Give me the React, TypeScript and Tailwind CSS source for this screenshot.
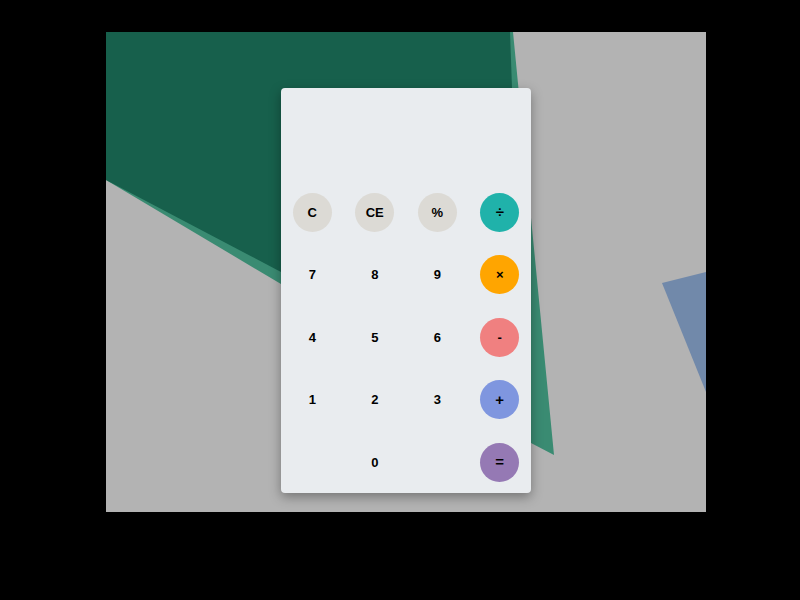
import React from "react";

type Btn = { label: string; cls: string };

const gray = "bg-[#dcdad5]";
const none = "bg-transparent";

const buttons: Btn[] = [
  { label: "C", cls: gray },
  { label: "CE", cls: gray },
  { label: "%", cls: gray },
  { label: "÷", cls: "bg-[#20b2aa] text-[15px]" },
  { label: "7", cls: none },
  { label: "8", cls: none },
  { label: "9", cls: none },
  { label: "×", cls: "bg-[#ffa500]" },
  { label: "4", cls: none },
  { label: "5", cls: none },
  { label: "6", cls: none },
  { label: "-", cls: "bg-[#f08080]" },
  { label: "1", cls: none },
  { label: "2", cls: none },
  { label: "3", cls: none },
  { label: "+", cls: "bg-[#7f96df] text-[15px]" },
  { label: "", cls: none },
  { label: "0", cls: none },
  { label: "", cls: none },
  { label: "=", cls: "bg-[#9579b4] text-[15px]" },
];

export default function App() {
  return (
    <div
      className="w-[800px] h-[600px] bg-black pt-[32px] pl-[106px]"
      style={{ fontFamily: '"Liberation Sans", Arial, sans-serif' }}
    >
      <div className="relative w-[600px] h-[480px] bg-[#b3b3b3] overflow-hidden pl-[175px] pt-[56px]">
        <svg
          className="absolute inset-0"
          width="600"
          height="480"
          viewBox="0 0 600 480"
        >
          <polygon
            points="0,0 407,0 448,423 425,411 175,252 0,148"
            fill="#3a8b72"
          />
          <polygon
            points="0,0 404,0 406,56 410,200 175,240 0,148"
            fill="#17604c"
          />
          <polygon points="556,251 600,240 600,360" fill="#7189aa" />
        </svg>
        <div className="relative w-[250px] h-[405px] bg-[#e9ecef] rounded-[4px] shadow-[0_4px_12px_rgba(0,0,0,0.35)] flex flex-col">
          <div className="h-[93px] shrink-0" />
          <div className="grid grid-cols-4">
            {buttons.map((b, i) => (
              <div key={i} className="h-[62.5px] flex items-center justify-center">
                {b.label !== "" && (
                  <div
                    className={`w-[39px] h-[39px] rounded-full flex items-center justify-center text-[13px] font-bold text-black ${b.cls}`}
                  >
                    {b.label}
                  </div>
                )}
              </div>
            ))}
          </div>
        </div>
      </div>
    </div>
  );
}
